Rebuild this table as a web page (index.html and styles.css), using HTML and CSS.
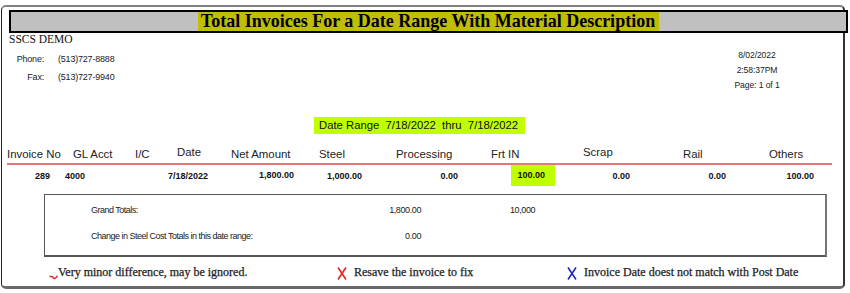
FILE: index.html
```html
<!DOCTYPE html>
<html>
<head>
<meta charset="utf-8">
<title>Total Invoices For a Date Range With Material Description</title>
<link rel="stylesheet" href="styles.css">
</head>
<body>
<div class="frame">
  <div class="titlebar">
    <h1 class="title">Total Invoices For a Date Range With Material Description</h1>
  </div>

  <div class="info">
    <div class="info-left">
      <div class="company">SSCS DEMO</div>
      <div class="contacts">
        <span class="c-label">Phone:</span><span class="c-value">(513)727-8888</span>
        <span class="c-label">Fax:</span><span class="c-value">(513)727-9940</span>
      </div>
    </div>
    <div class="dates">
      <div>8/02/2022</div>
      <div>2:58:37PM</div>
      <div>Page: 1 of 1</div>
    </div>
  </div>

  <div class="range-row">
    <span class="range">Date Range  7/18/2022  thru  7/18/2022</span>
  </div>

  <div class="heads">
    <span>Invoice No</span>
    <span>GL Acct</span>
    <span>I/C</span>
    <span class="hi">Date</span>
    <span>Net Amount</span>
    <span>Steel</span>
    <span>Processing</span>
    <span>Frt IN</span>
    <span class="hi">Scrap</span>
    <span>Rail</span>
    <span>Others</span>
  </div>
  <div class="rule"></div>
  <div class="data">
    <span>289</span>
    <span class="left">4000</span>
    <span>7/18/2022</span>
    <span class="up">1,800.00</span>
    <span>1,000.00</span>
    <span>0.00</span>
    <span class="mark">100.00</span>
    <span>0.00</span>
    <span>0.00</span>
    <span>100.00</span>
  </div>

  <div class="totals">
    <div class="tot-row">
      <span class="tot-label">Grand Totals:</span>
      <span class="tot-val">1,800.00</span>
      <span class="tot-extra">10,000</span>
    </div>
    <div class="tot-row">
      <span class="tot-label">Change in Steel Cost Totals in this date range:</span>
      <span class="tot-val">0.00</span>
      <span class="tot-extra"></span>
    </div>
  </div>

  <div class="legend">
    <div class="leg-item">
      <svg class="squiggle" width="9" height="16" viewBox="0 0 9 16"><path d="M0.5 12.5 L3 12.5 C4 12.5 4 14.5 5.5 14.5 C7 14.5 7.5 12.5 8.5 12" fill="none" stroke="#d42a2a" stroke-width="1.5"/></svg>
      <span>Very minor difference, may be ignored.</span>
    </div>
    <div class="leg-item">
      <svg class="xmark" width="10" height="13" viewBox="0 0 10 13"><path d="M1 0.5 L9 12.5 M9 0.5 L1 12.5" fill="none" stroke="#e52424" stroke-width="1.6"/></svg>
      <span>Resave the invoice to fix</span>
    </div>
    <div class="leg-item">
      <svg class="xmark" width="10" height="13" viewBox="0 0 10 13"><path d="M1 0.5 L9 12.5 M9 0.5 L1 12.5" fill="none" stroke="#2424c8" stroke-width="1.6"/></svg>
      <span>Invoice Date doest not match with Post Date</span>
    </div>
  </div>
</div>
</body>
</html>
```

FILE: styles.css
```css
* { box-sizing: border-box; }
html, body { margin: 0; padding: 0; background: #fff; }
body {
  font-family: "Liberation Sans", Arial, sans-serif;
  color: #111;
}

.frame {
  margin: 5px 0 0 1px;
  width: 844px;
  height: 284px;
  border-top: 2px solid #808080;
  border-left: 1px solid #222;
  border-right: 2px solid #333;
  border-bottom: 3px solid #6a6a6a;
  border-radius: 5px;
  display: flex;
  flex-direction: column;
}

.titlebar {
  margin: 3px -5px 0 7px;
  height: 23px;
  border: 2px solid #000;
  background: #c0c0c0;
  display: flex;
  justify-content: center;
}
.title {
  margin: 0;
  background: #bfbf00;
  font-family: "Liberation Serif", "Times New Roman", serif;
  font-weight: bold;
  font-size: 18px;
  line-height: 19px;
  padding: 0 4px 0 3px;
  color: #000;
}

.info {
  display: flex;
  justify-content: space-between;
  align-items: flex-start;
}
.company {
  font-family: "Liberation Serif", "Times New Roman", serif;
  font-size: 11.5px;
  line-height: 13px;
  padding-left: 7px;
  color: #111;
}
.contacts {
  margin-top: 4px;
  display: grid;
  grid-template-columns: 42px auto;
  column-gap: 14px;
  font-size: 9px;
  line-height: 18px;
  letter-spacing: -0.2px;
  color: #222;
}
.c-label { text-align: right; }

.dates {
  margin: 15px 56px 0 0;
  width: 60px;
  text-align: center;
  font-size: 8.6px;
  line-height: 15px;
  letter-spacing: -0.1px;
  color: #222;
}

.range-row {
  margin-top: 24px;
  display: flex;
  padding-left: 312px;
}
.range {
  white-space: pre;
  background: #bfff00;
  font-size: 11.3px;
  line-height: 17px;
  padding: 0 7px 0 5px;
  color: #111;
}

.heads {
  margin-top: 10px;
  height: 19px;
  padding-left: 5px;
  display: grid;
  grid-template-columns: 66px 62px 42px 54px 88px 77px 95px 92px 100px 86px 1fr;
  align-items: center;
  font-size: 11.4px;
  color: #222;
  white-space: nowrap;
}
.heads .hi { padding-bottom: 4px; }

.rule {
  margin: 0 11px 0 5px;
  height: 2px;
  background: #e47878;
}

.data {
  height: 21px;
  padding-left: 5px;
  display: grid;
  grid-template-columns: 43px 34px 124px 86px 68px 96px 97px 75px 96px 88px;
  align-items: center;
  font-size: 9px;
  font-weight: bold;
  color: #111;
  text-align: right;
  white-space: nowrap;
}
.data .left { text-align: left; padding-left: 15px; }
.data .up { padding-bottom: 2px; }
.data .mark {
  justify-self: end;
  align-self: stretch;
  background: #bfff00;
  line-height: 21px;
  padding: 0 10px 0 6px;
}

.totals {
  margin: 8px 16px 0 42px;
  border-top: 1px solid #555;
  border-left: 1px solid #555;
  border-right: 2px solid #777;
  border-bottom: 2px solid #555;
  padding: 7px 0 11px 46px;
  display: flex;
  flex-direction: column;
  gap: 10px;
}
.tot-row {
  display: grid;
  grid-template-columns: 270px 60px 1fr;
  font-size: 9px;
  line-height: 16px;
  letter-spacing: -0.5px;
  color: #222;
  white-space: nowrap;
}
.tot-val { text-align: right; letter-spacing: -0.4px; }
.tot-extra { padding-left: 89px; letter-spacing: -0.4px; }

.legend {
  margin-top: 7px;
  padding-left: 47px;
  display: grid;
  grid-template-columns: 288px 230px 1fr;
  font-family: "Liberation Serif", "Times New Roman", serif;
  font-size: 12px;
  line-height: 16px;
  color: #222;
  -webkit-text-stroke: 0.25px #222;
  white-space: nowrap;
}
.leg-item {
  display: flex;
  align-items: center;
}
.squiggle { display: block; flex: none; }
.xmark { display: block; flex: none; margin-top: 2px; margin-right: 7px; }
```
